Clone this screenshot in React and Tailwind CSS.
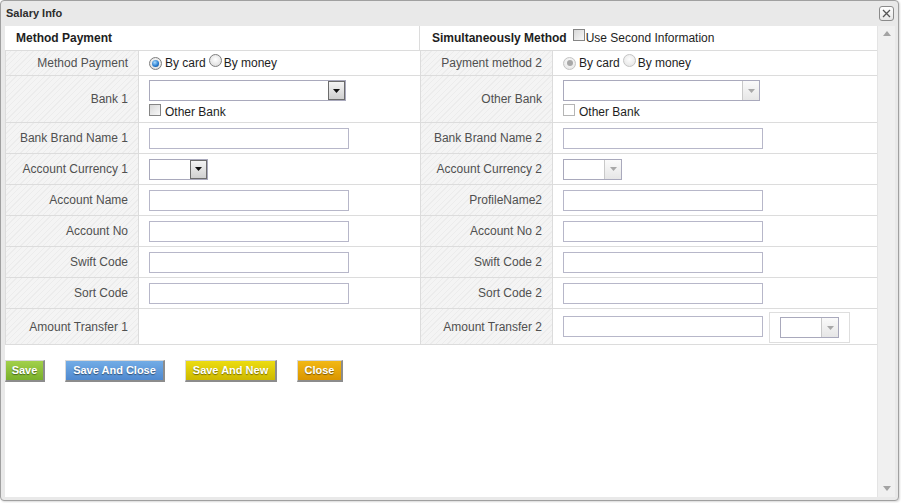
import React from "react";

const LABEL =
  "flex items-center justify-end pr-[10px] border-r border-[#dcdcdc] text-[#505050] bg-[repeating-linear-gradient(135deg,#f4f4f4_0px,#f4f4f4_3px,#ececec_3px,#ececec_4px)]";
const VALUE = "flex items-center pl-[10px] border-r border-[#dcdcdc]";

function Radio({ checked, disabled }) {
  if (disabled) {
    return (
      <span className="inline-flex w-[13px] h-[13px] rounded-full border border-[#c4c4c4] bg-[radial-gradient(circle_at_50%_40%,#fdfdfd,#e2e2e2)] items-center justify-center shrink-0">
        {checked && <span className="w-[6px] h-[6px] rounded-full bg-[#a8a8a8]" />}
      </span>
    );
  }
  return (
    <span className="inline-flex w-[13px] h-[13px] rounded-full border border-[#7e7e7e] bg-[radial-gradient(circle_at_50%_40%,#ffffff,#d6d6d6)] items-center justify-center shrink-0">
      {checked && (
        <span className="w-[7px] h-[7px] rounded-full bg-[radial-gradient(circle_at_40%_35%,#a8dcff,#2277cc_60%,#0c3f78)]" />
      )}
    </span>
  );
}

function Check({ disabled }) {
  return disabled ? (
    <span className="inline-block w-[12px] h-[12px] border border-[#b5b5b5] bg-white shrink-0" />
  ) : (
    <span className="inline-block w-[12px] h-[12px] border border-[#858585] bg-[linear-gradient(135deg,#d8d8d8,#f8f8f8)] shrink-0" />
  );
}

function Select({ wide, disabled }) {
  return (
    <div
      className={
        wide
          ? "flex w-[197px] h-[21px] border border-[#a9a9bc] bg-white"
          : "flex w-[59px] h-[21px] border border-[#a9a9bc] bg-white"
      }
    >
      <div className="flex-1" />
      {disabled ? (
        <div className="w-[17px] h-full border-l border-[#c9c9c9] bg-[linear-gradient(#fafafa,#e6e6e6)] flex items-center justify-center">
          <svg width="7" height="4" viewBox="0 0 7 4">
            <path d="M0 0H7L3.5 4Z" fill="#a8a8a8" />
          </svg>
        </div>
      ) : (
        <div className="w-[17px] h-full border border-[#6c6c6c] bg-[linear-gradient(#f4f4f4,#cfcfcf)] flex items-center justify-center">
          <svg width="7" height="4" viewBox="0 0 7 4">
            <path d="M0 0H7L3.5 4Z" fill="#111" />
          </svg>
        </div>
      )}
    </div>
  );
}

function Input() {
  return <div className="w-[200px] h-[21px] border border-[#b7b7c9] bg-white" />;
}

function Row({ h, children }) {
  return (
    <div className={`grid grid-cols-[133px_282px_132px_325px] border-b border-[#dcdcdc] ${h}`}>
      {children}
    </div>
  );
}

function SimpleRow({ l1, l2, right, left }) {
  return (
    <Row h="h-[31px]">
      <div className={LABEL}>{l1}</div>
      <div className={VALUE}>{left}</div>
      <div className={LABEL}>{l2}</div>
      <div className="flex items-center pl-[10px]">{right}</div>
    </Row>
  );
}

function Btn({ w, cls, children }) {
  return (
    <button
      className={`${w} h-[22px] ${cls} border-t border-l border-t-[#d8d8d8] border-l-[#d8d8d8] border-b-2 border-r-2 border-b-[#8c8c8c] border-r-[#8c8c8c] text-white font-bold text-[11px] [text-shadow:0_1px_1px_rgba(0,0,0,0.45)] flex items-center justify-center`}
    >
      {children}
    </button>
  );
}

export default function App() {
  return (
    <div className="w-[901px] h-[503px] bg-white font-['Liberation_Sans',Arial,sans-serif] text-[12px] text-[#1e1e1e]">
      <div className="w-[899px] h-[501px] border border-[#a0a0a0] rounded-[4px] bg-[#e9e9e9] flex flex-col overflow-hidden shadow-[1px_1px_2px_rgba(0,0,0,0.15)]">
        {/* title */}
        <div className="h-[25px] flex items-center justify-between pl-[5px] pr-[4px] shrink-0">
          <span className="font-bold text-[11px] text-[#2d2d2d]">Salary Info</span>
          <span className="w-[15px] h-[15px] border border-[#8a8a8a] rounded-[3px] bg-[linear-gradient(#ffffff,#e6e6e6)] flex items-center justify-center">
            <svg width="9" height="9" viewBox="0 0 9 9">
              <path d="M1 1L8 8M8 1L1 8" stroke="#555" strokeWidth="1.3" />
            </svg>
          </span>
        </div>
        {/* body */}
        <div className="flex-1 flex pl-[4px] pr-[3px] pb-[3px] min-h-0">
          <div className="w-[872px] bg-white">
            {/* header */}
            <div className="grid grid-cols-[415px_457px] h-[25px] border-b border-[#dcdcdc]">
              <div className="flex items-center pl-[11px] border-r border-[#dcdcdc] font-bold">
                Method Payment
              </div>
              <div className="flex items-center pl-[12px]">
                <span className="font-bold">Simultaneously Method</span>
                <span className="ml-[6px] mt-[-2px]">
                  <Check />
                </span>
                <span className="ml-[1px]">Use Second Information</span>
              </div>
            </div>
            <div className="border-l border-[#dcdcdc]">
              <Row h="h-[25px]">
                <div className={LABEL}>Method Payment</div>
                <div className={VALUE}>
                  <Radio checked />
                  <span className="ml-[3px]">By card</span>
                  <span className="ml-[3px]"><Radio /></span>
                  <span className="ml-[2px]">By money</span>
                </div>
                <div className={LABEL}>Payment method 2</div>
                <div className="flex items-center pl-[10px]">
                  <Radio checked disabled />
                  <span className="ml-[3px]">By card</span>
                  <span className="ml-[3px]"><Radio disabled /></span>
                  <span className="ml-[2px]">By money</span>
                </div>
              </Row>
              <Row h="h-[47px]">
                <div className={LABEL}>Bank 1</div>
                <div className="flex flex-col pl-[10px] pt-[4px] border-r border-[#dcdcdc]">
                  <Select wide />
                  <div className="flex items-center h-[16px] mt-[1px]">
                    <Check />
                    <span className="ml-[4px] mt-[3px]">Other Bank</span>
                  </div>
                </div>
                <div className={LABEL}>Other Bank</div>
                <div className="flex flex-col pl-[10px] pt-[4px]">
                  <Select wide disabled />
                  <div className="flex items-center h-[16px] mt-[1px]">
                    <Check disabled />
                    <span className="ml-[4px] mt-[3px]">Other Bank</span>
                  </div>
                </div>
              </Row>
              <SimpleRow l1="Bank Brand Name 1" l2="Bank Brand Name 2" left={<Input />} right={<Input />} />
              <SimpleRow
                l1="Account Currency 1"
                l2="Account Currency 2"
                left={<Select />}
                right={<Select disabled />}
              />
              <SimpleRow l1="Account Name" l2="ProfileName2" left={<Input />} right={<Input />} />
              <SimpleRow l1="Account No" l2="Account No 2" left={<Input />} right={<Input />} />
              <SimpleRow l1="Swift Code" l2="Swift Code 2" left={<Input />} right={<Input />} />
              <SimpleRow l1="Sort Code" l2="Sort Code 2" left={<Input />} right={<Input />} />
              <Row h="h-[36px]">
                <div className={LABEL}>Amount Transfer 1</div>
                <div className={VALUE} />
                <div className={LABEL}>Amount Transfer 2</div>
                <div className="flex items-center pl-[10px]">
                  <Input />
                  <div className="ml-[6px] w-[81px] h-[31px] mt-[2px] border border-[#dedede] flex items-center pl-[10px]">
                    <Select disabled />
                  </div>
                </div>
              </Row>
            </div>
            {/* buttons */}
            <div className="flex mt-[15px] gap-[20px]">
              <Btn w="w-[40px]" cls="bg-[linear-gradient(#a2d04a,#79b02b)]">Save</Btn>
              <Btn w="w-[100px]" cls="bg-[linear-gradient(#72ace6,#4f89cf)]">Save And Close</Btn>
              <Btn w="w-[92px]" cls="bg-[linear-gradient(#ecdc10,#cdb900)]">Save And New</Btn>
              <Btn w="w-[46px]" cls="bg-[linear-gradient(#f2b814,#da9600)]">Close</Btn>
            </div>
          </div>
          {/* scrollbar */}
          <div className="w-[18px] bg-[#f0f0f0] border-l border-[#e4e4e4] flex flex-col items-center justify-between pt-[5px] pb-[6px]">
            <svg width="8" height="5" viewBox="0 0 8 5">
              <path d="M0 5H8L4 0Z" fill="#a3a3a3" />
            </svg>
            <svg width="8" height="5" viewBox="0 0 8 5">
              <path d="M0 0H8L4 5Z" fill="#a3a3a3" />
            </svg>
          </div>
        </div>
      </div>
    </div>
  );
}
